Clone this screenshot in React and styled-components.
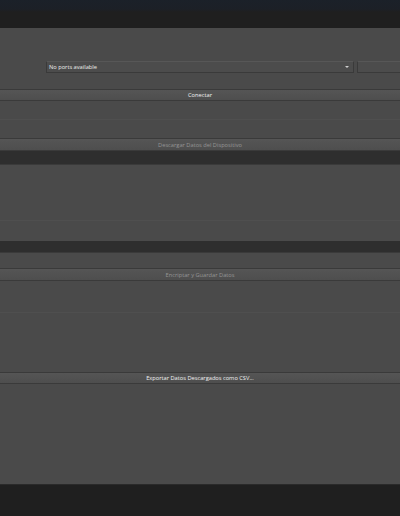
import React from 'react';
import styled, { createGlobalStyle } from 'styled-components';

const Global = createGlobalStyle`
  html, body { margin: 0; padding: 0; background: #1f1f1f; }
  body { font-family: "Open Sans", "Noto Sans", sans-serif; }
`;

const Window = styled.div`
  width: 400px;
  height: 516px;
  display: flex;
  flex-direction: column;
  overflow: hidden;
  background: #4a4a4a;
`;

const TitleBar = styled.div`
  height: 28px;
  flex: none;
  background: linear-gradient(#1b2129 0px, #1c2027 9px, #1f1f1f 12px, #1f1f1f 100%);
`;

const Panel = styled.div`
  height: ${p => p.h}px;
  flex: none;
  background: #4a4a4a;
  display: flex;
  flex-direction: column;
`;

const FaintRow = styled.div`
  height: ${p => p.h}px;
  flex: none;
  border-bottom: 1px solid #4f4f4f;
`;

const PortRow = styled.div`
  margin-top: 33px;
  height: 13px;
  display: flex;
  gap: 3px;
  padding-left: 46px;
`;

const Combo = styled.div`
  width: 308px;
  height: 12px;
  box-sizing: border-box;
  border: 1px solid #3a3a3a;
  border-top-color: #575757;
  background: #4c4c4c;
  display: flex;
  align-items: center;
  justify-content: space-between;
  padding: 0 4px 0 2px;
  font-size: 5.7px;
  color: #ececec;
`;

const Arrow = styled.span`
  width: 0;
  height: 0;
  border-left: 2px solid transparent;
  border-right: 2px solid transparent;
  border-top: 2px solid #cfcfcf;
`;

const SideBox = styled.div`
  flex: 1;
  height: 12px;
  box-sizing: border-box;
  border: 1px solid #3a3a3a;
  border-top-color: #575757;
  border-right: none;
  background: #4c4c4c;
`;

const Button = styled.div`
  height: ${p => p.h || 12}px;
  flex: none;
  box-sizing: border-box;
  border-top: 1px solid #3a3a3a;
  border-bottom: 1px solid #3a3a3a;
  background: linear-gradient(#555555, #4e4e4e);
  display: flex;
  align-items: center;
  justify-content: center;
  font-size: 5.7px;
  color: ${p => (p.disabled ? '#959595' : '#f2f2f2')};
`;

const Strip = styled.div`
  height: ${p => p.h}px;
  flex: none;
  background: #2e2e2e;
  border-bottom: 1px solid #3a3a3a;
  box-sizing: border-box;
`;

const Footer = styled.div`
  flex: 1;
  background: #1f1f1f;
  border-top: 1px solid #2a2a2a;
`;

export default function App() {
  return (
    <>
      <Global />
      <Window>
        <TitleBar />
        <Panel h={61}>
          <PortRow>
            <Combo>
              <span>No ports available</span>
              <Arrow />
            </Combo>
            <SideBox />
          </PortRow>
        </Panel>
        <Button h={12}>Conectar</Button>
        <Panel h={37}>
          <FaintRow h={18} />
        </Panel>
        <Button h={13} disabled>Descargar Datos del Dispositivo</Button>
        <Strip h={14} />
        <Panel h={76}>
          <FaintRow h={55} />
        </Panel>
        <Strip h={12} />
        <Panel h={15} />
        <Button h={13} disabled>Encriptar y Guardar Datos</Button>
        <Panel h={91}>
          <FaintRow h={31} />
        </Panel>
        <Button h={12}>Exportar Datos Descargados como CSV...</Button>
        <Panel h={100} />
        <Footer />
      </Window>
    </>
  );
}
